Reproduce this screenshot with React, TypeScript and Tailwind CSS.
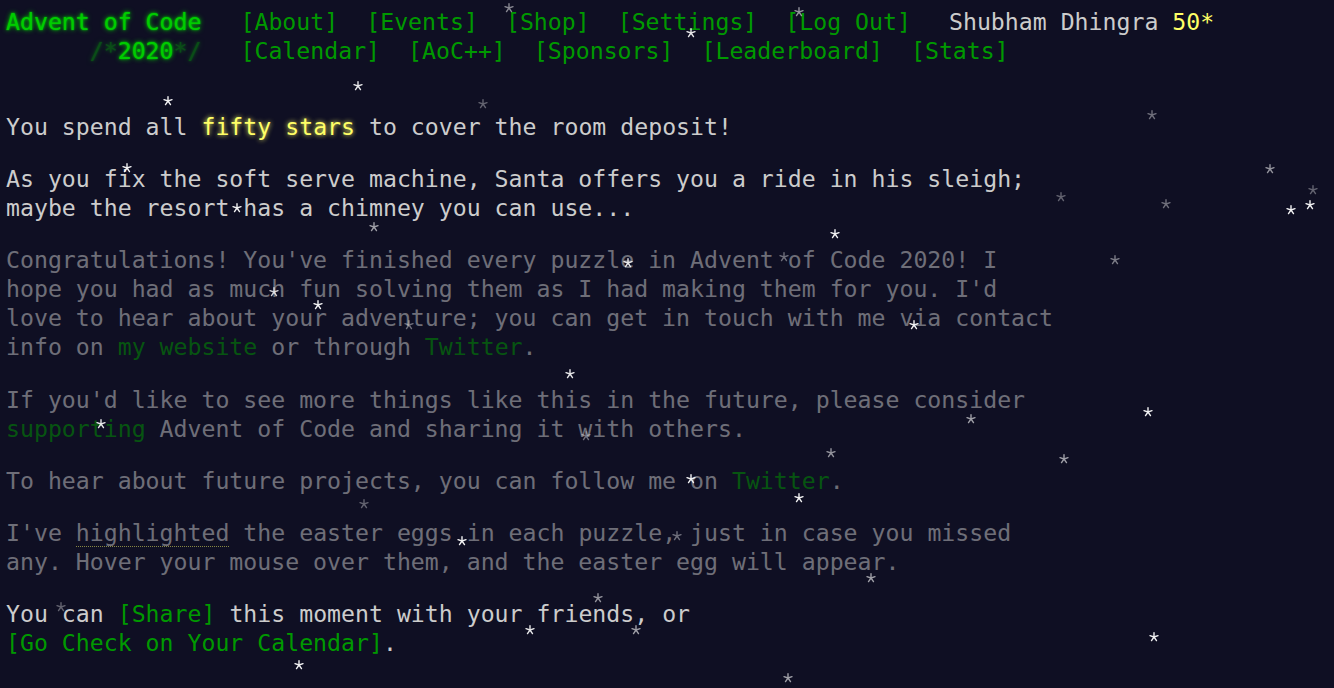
import React from 'react';

type Flake = { x: number; y: number; o: number };

const flakes: Flake[] = [
  { x: 509, y: 8, o: 0.5 },
  { x: 691, y: 33, o: 0.9 },
  { x: 799, y: 12, o: 0.55 },
  { x: 168, y: 101, o: 0.95 },
  { x: 358, y: 86, o: 0.9 },
  { x: 483, y: 104, o: 0.35 },
  { x: 1152, y: 115, o: 0.4 },
  { x: 127, y: 168, o: 0.95 },
  { x: 1270, y: 169, o: 0.55 },
  { x: 1313, y: 190, o: 0.35 },
  { x: 1061, y: 197, o: 0.35 },
  { x: 1166, y: 204, o: 0.4 },
  { x: 1291, y: 210, o: 0.95 },
  { x: 1310, y: 205, o: 0.95 },
  { x: 237, y: 208, o: 0.95 },
  { x: 374, y: 227, o: 0.6 },
  { x: 835, y: 234, o: 0.95 },
  { x: 628, y: 263, o: 0.9 },
  { x: 784, y: 257, o: 0.4 },
  { x: 1115, y: 260, o: 0.45 },
  { x: 274, y: 292, o: 0.8 },
  { x: 318, y: 305, o: 0.95 },
  { x: 409, y: 325, o: 0.4 },
  { x: 914, y: 325, o: 0.95 },
  { x: 570, y: 374, o: 0.9 },
  { x: 101, y: 424, o: 0.9 },
  { x: 586, y: 436, o: 0.4 },
  { x: 1148, y: 412, o: 0.95 },
  { x: 971, y: 419, o: 0.6 },
  { x: 831, y: 453, o: 0.55 },
  { x: 1064, y: 459, o: 0.6 },
  { x: 691, y: 479, o: 0.95 },
  { x: 799, y: 498, o: 0.95 },
  { x: 364, y: 504, o: 0.35 },
  { x: 462, y: 541, o: 0.95 },
  { x: 677, y: 536, o: 0.4 },
  { x: 871, y: 578, o: 0.6 },
  { x: 61, y: 607, o: 0.35 },
  { x: 598, y: 598, o: 0.55 },
  { x: 530, y: 630, o: 0.9 },
  { x: 636, y: 630, o: 0.6 },
  { x: 1154, y: 637, o: 0.95 },
  { x: 299, y: 665, o: 0.95 },
  { x: 788, y: 678, o: 0.6 },
];

function Flake({ x, y, o }: Flake) {
  return (
    <svg
      className="absolute pointer-events-none"
      style={{ left: x - 5, top: y - 5, opacity: o }}
      width="10"
      height="10"
      viewBox="0 0 10 10"
    >
      <g stroke="#ffffff" strokeWidth="1.4" strokeLinecap="round">
        <line x1="5" y1="5" x2="5" y2="0.8" />
        <line x1="5" y1="5" x2="9" y2="3.7" />
        <line x1="5" y1="5" x2="7.5" y2="8.6" />
        <line x1="5" y1="5" x2="2.5" y2="8.6" />
        <line x1="5" y1="5" x2="1" y2="3.7" />
      </g>
    </svg>
  );
}

const linkCls = 'text-[#009900] hover:text-[#99ff99]';

function NavItem({ label }: { label: string }) {
  return (
    <li className="px-[14px]">
      <a className={linkCls} href="#">
        [{label}]
      </a>
    </li>
  );
}

export default function App() {
  return (
    <div className="relative min-h-[688px] overflow-hidden bg-[#0f0f23] text-[#cccccc] font-['DejaVu_Sans_Mono',monospace] text-[23.2px] leading-[29px]">
      <header className="pt-[7px] pl-[6px]">
        <div className="flex whitespace-pre">
          <h1 className="pr-[25px] text-[#00cc00] [text-shadow:0_0_2px_#00cc00,0_0_5px_#00cc00]">
            Advent of Code
          </h1>
          <ul className="flex">
            <NavItem label="About" />
            <NavItem label="Events" />
            <NavItem label="Shop" />
            <NavItem label="Settings" />
            <NavItem label="Log Out" />
          </ul>
          <div className="pl-[24px]">
            Shubham Dhingra <span className="text-[#ffff66]">50*</span>
          </div>
        </div>
        <div className="flex whitespace-pre">
          <h1 className="pr-[25px] text-[#00cc00] [text-shadow:0_0_2px_#00cc00,0_0_5px_#00cc00]">
            {'      '}
            <span className="opacity-[0.33]">/*</span>
            2020
            <span className="opacity-[0.33]">*/</span>
          </h1>
          <ul className="flex">
            <NavItem label="Calendar" />
            <NavItem label="AoC++" />
            <NavItem label="Sponsors" />
            <NavItem label="Leaderboard" />
            <NavItem label="Stats" />
          </ul>
        </div>
      </header>

      <main className="flex flex-col gap-[23.2px] pt-[47px] pl-[6px] whitespace-pre">
        <p>
          You spend all{' '}
          <span className="text-[#ffff66] [text-shadow:0_0_5px_#ffff66]">fifty stars</span> to
          cover the room deposit!
        </p>
        <p>
          As you fix the soft serve machine, Santa offers you a ride in his sleigh;
          <br />
          maybe the resort has a chimney you can use...
        </p>
        <p className="opacity-50">
          Congratulations! You've finished every puzzle in Advent of Code 2020! I
          <br />
          hope you had as much fun solving them as I had making them for you. I'd
          <br />
          love to hear about your adventure; you can get in touch with me via contact
          <br />
          info on <a className={linkCls} href="#">my website</a> or through{' '}
          <a className={linkCls} href="#">Twitter</a>.
        </p>
        <p className="opacity-50">
          If you'd like to see more things like this in the future, please consider
          <br />
          <a className={linkCls} href="#">supporting</a> Advent of Code and sharing it with others.
        </p>
        <p className="opacity-50">
          To hear about future projects, you can follow me on{' '}
          <a className={linkCls} href="#">Twitter</a>.
        </p>
        <p className="opacity-50">
          I've{' '}
          <span className="border-b border-dotted border-[#ffff66]">highlighted</span> the
          easter eggs in each puzzle, just in case you missed
          <br />
          any. Hover your mouse over them, and the easter egg will appear.
        </p>
        <p>
          You can <a className={linkCls} href="#">[Share]</a> this moment with your friends, or
          <br />
          <a className={linkCls} href="#">[Go Check on Your Calendar]</a>.
        </p>
      </main>

      {flakes.map((f, i) => (
        <Flake key={i} {...f} />
      ))}
    </div>
  );
}
